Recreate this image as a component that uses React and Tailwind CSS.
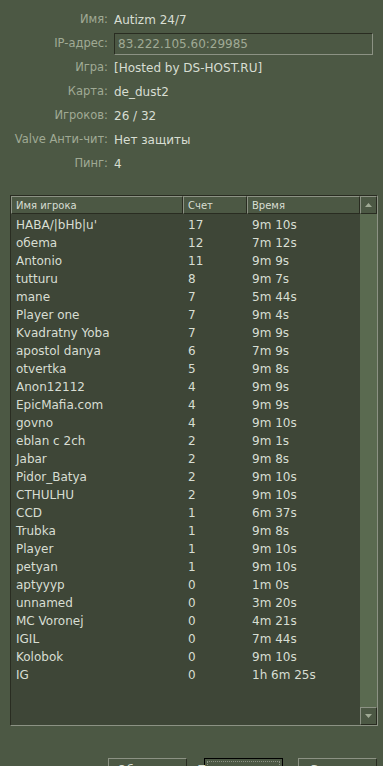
const info = [
  { label: 'Имя:', value: 'Autizm 24/7' },
  { label: 'IP-адрес:', value: '83.222.105.60:29985', box: true },
  { label: 'Игра:', value: '[Hosted by DS-HOST.RU]' },
  { label: 'Карта:', value: 'de_dust2' },
  { label: 'Игроков:', value: '26 / 32' },
  { label: 'Valve Анти-чит:', value: 'Нет защиты' },
  { label: 'Пинг:', value: '4' },
];

const players = [
  ['HABA/|bHb|u\'', '17', '9m 10s'],
  ['обema', '12', '7m 12s'],
  ['Antonio', '11', '9m 9s'],
  ['tutturu', '8', '9m 7s'],
  ['mane', '7', '5m 44s'],
  ['Player one', '7', '9m 4s'],
  ['Kvadratny Yoba', '7', '9m 9s'],
  ['apostol danya', '6', '7m 9s'],
  ['otvertka', '5', '9m 8s'],
  ['Anon12112', '4', '9m 9s'],
  ['EpicMafia.com', '4', '9m 9s'],
  ['govno', '4', '9m 10s'],
  ['eblan c 2ch', '2', '9m 1s'],
  ['Jabar', '2', '9m 8s'],
  ['Pidor_Batya', '2', '9m 10s'],
  ['CTHULHU', '2', '9m 10s'],
  ['CCD', '1', '6m 37s'],
  ['Trubka', '1', '9m 8s'],
  ['Player', '1', '9m 10s'],
  ['petyan', '1', '9m 10s'],
  ['aptyyyp', '0', '1m 0s'],
  ['unnamed', '0', '3m 20s'],
  ['MC Voronej', '0', '4m 21s'],
  ['IGIL', '0', '7m 44s'],
  ['Kolobok', '0', '9m 10s'],
  ['IG', '0', '1h 6m 25s'],
];

const bevel = 'border border-t-[#8C9284] border-l-[#8C9284] border-b-[#292C21] border-r-[#292C21]';

const Arrow = ({ up }) => (
  <svg width="7" height="4" viewBox="0 0 7 4" className="block">
    <polygon points={up ? '3.5,0 7,4 0,4' : '0,0 7,0 3.5,4'} fill="#A0AA95" />
  </svg>
);

export default function App() {
  return (
    <div
      className="w-[383px] h-[766px] overflow-hidden bg-[#4C5844] text-[#D8DED3]"
      style={{ fontFamily: '"DejaVu Sans", Verdana, sans-serif' }}
    >
      {/* Server info */}
      <div className="pt-[8px]">
        {info.map((row) => (
          <div key={row.label} className="flex items-center h-6 text-[12px]">
            <div className="w-[108px] text-right text-[11.5px] text-[#A0AA95] shrink-0">{row.label}</div>
            {row.box ? (
              <div className="ml-[6px] w-[259px] h-[22px] flex items-center pl-[3px] border border-t-[#292C21] border-l-[#292C21] border-b-[#8C9284] border-r-[#8C9284] text-[#A0AA95]">
                {row.value}
              </div>
            ) : (
              <div className="ml-[6px]">{row.value}</div>
            )}
          </div>
        ))}
      </div>

      {/* Player list */}
      <div className="mt-[19px] ml-[10px] w-[368px] h-[531px] flex border border-t-[#292C21] border-l-[#292C21] border-b-[#8C9284] border-r-[#8C9284] bg-[#3E4637]">
        <div className="flex-1 flex flex-col">
          <div className="flex h-[18px] text-[10px] shrink-0">
            <div className={`w-[172px] ${bevel} bg-[#4C5844] flex items-center pl-[4px]`}>Имя игрока</div>
            <div className={`w-[64px] ${bevel} bg-[#4C5844] flex items-center pl-[4px]`}>Счет</div>
            <div className={`flex-1 ${bevel} bg-[#4C5844] flex items-center pl-[4px]`}>Время</div>
          </div>
          <div className="pt-[2px] text-[12px]">
            {players.map(([name, score, time]) => (
              <div key={name} className="flex h-[18px] items-center">
                <div className="w-[172px] pl-[5px]">{name}</div>
                <div className="w-[64px] pl-[5px]">{score}</div>
                <div className="flex-1 pl-[5px]">{time}</div>
              </div>
            ))}
          </div>
        </div>
        <div className="w-[17px] flex flex-col bg-[#5A6A50]">
          <div className={`h-[18px] ${bevel} bg-[#4C5844] flex items-center justify-center`}>
            <Arrow up />
          </div>
          <div className="flex-1" />
          <div className={`h-[18px] ${bevel} bg-[#4C5844] flex items-center justify-center`}>
            <Arrow />
          </div>
        </div>
      </div>

      {/* Buttons */}
      <div className="mt-[32px] flex text-[12px]">
        <button className={`ml-[108px] w-[79px] h-[24px] ${bevel} bg-[#4C5844] text-[#D8DED3]`}>Обновить</button>
        <button className="ml-[17px] w-[79px] h-[24px] border border-black bg-[#4C5844] p-[2px] text-[#D8DED3]">
          <div className="w-full h-full border border-dotted border-[#8C9284] flex items-center justify-center">Подключиться</div>
        </button>
        <button className={`ml-[15px] w-[79px] h-[24px] ${bevel} bg-[#4C5844] text-[#D8DED3]`}>Закрыть</button>
      </div>
    </div>
  );
}
